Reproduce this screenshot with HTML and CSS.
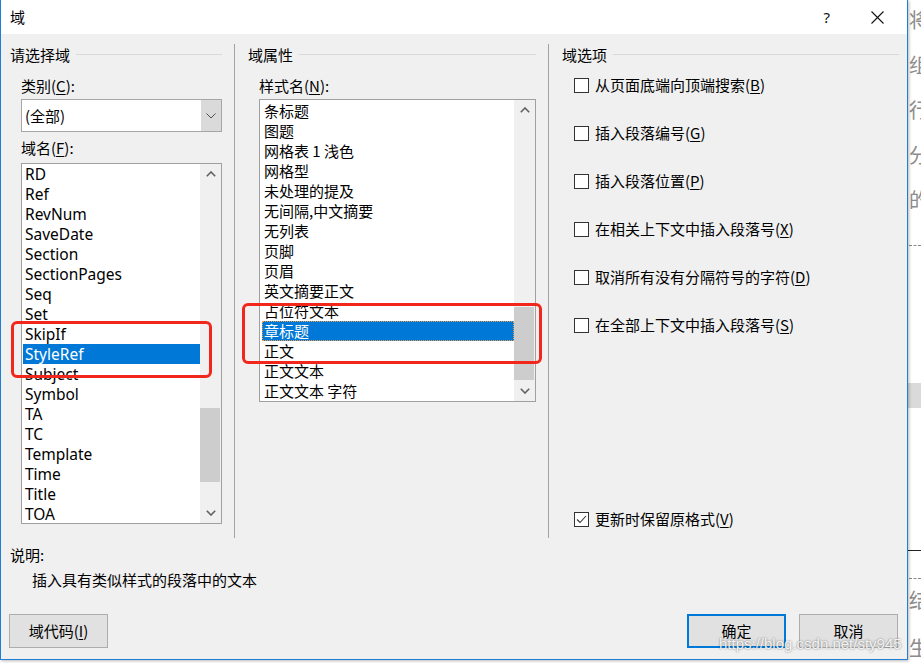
FILE: index.html
```html
<!DOCTYPE html>
<html lang="zh-CN">
<head>
<meta charset="utf-8">
<title>域</title>
<link rel="stylesheet" href="styles.css">
</head>
<body>
<div class="page">
  <div class="dialog">
    <div class="titlebar">
      <span class="title">域</span>
      <span class="help">?</span>
      <svg class="close" width="13" height="13" viewBox="0 0 13 13"><path d="M0.5 0.5 L12.5 12.5 M12.5 0.5 L0.5 12.5" stroke="#111" stroke-width="1.1" fill="none"/></svg>
    </div>

    <div class="main">
      <section class="col col1">
        <div class="group-head"><span>请选择域</span></div>
        <div class="field">
          <div class="label label-first">类别(<u>C</u>):</div>
          <div class="combo">
            <span class="combo-value">(全部)</span>
            <span class="combo-btn"><svg width="10" height="6" viewBox="0 0 10 6"><polyline points="0.5,0.5 5,5 9.5,0.5" fill="none" stroke="#505050" stroke-width="1"/></svg></span>
          </div>
          <div class="label label-second">域名(<u>F</u>):</div>
          <div class="listbox list-fields">
            <ul class="items latin">
              <li>RD</li>
              <li>Ref</li>
              <li>RevNum</li>
              <li>SaveDate</li>
              <li>Section</li>
              <li>SectionPages</li>
              <li>Seq</li>
              <li>Set</li>
              <li>SkipIf</li>
              <li class="sel">StyleRef</li>
              <li>Subject</li>
              <li>Symbol</li>
              <li>TA</li>
              <li>TC</li>
              <li>Template</li>
              <li>Time</li>
              <li>Title</li>
              <li>TOA</li>
            </ul>
            <div class="scrollbar">
              <div class="sb-btn"><svg width="10" height="6" viewBox="0 0 10 6"><polyline points="0.8,5.2 5,1 9.2,5.2" fill="none" stroke="#606060" stroke-width="1.6"/></svg></div>
              <div class="sb-track"><div class="sb-thumb"></div></div>
              <div class="sb-btn"><svg width="10" height="6" viewBox="0 0 10 6"><polyline points="0.8,0.8 5,5 9.2,0.8" fill="none" stroke="#606060" stroke-width="1.6"/></svg></div>
            </div>
          </div>
        </div>
      </section>

      <section class="col col2">
        <div class="group-head"><span>域属性</span></div>
        <div class="field">
          <div class="label label-first">样式名(<u>N</u>):</div>
          <div class="listbox list-styles">
            <ul class="items">
              <li>条标题</li>
              <li>图题</li>
              <li>网格表 1 浅色</li>
              <li>网格型</li>
              <li>未处理的提及</li>
              <li>无间隔,中文摘要</li>
              <li>无列表</li>
              <li>页脚</li>
              <li>页眉</li>
              <li>英文摘要正文</li>
              <li>占位符文本</li>
              <li class="sel">章标题</li>
              <li>正文</li>
              <li>正文文本</li>
              <li>正文文本 字符</li>
            </ul>
            <div class="scrollbar">
              <div class="sb-btn"><svg width="10" height="6" viewBox="0 0 10 6"><polyline points="0.8,5.2 5,1 9.2,5.2" fill="none" stroke="#606060" stroke-width="1.6"/></svg></div>
              <div class="sb-track"><div class="sb-thumb"></div></div>
              <div class="sb-btn"><svg width="10" height="6" viewBox="0 0 10 6"><polyline points="0.8,0.8 5,5 9.2,0.8" fill="none" stroke="#606060" stroke-width="1.6"/></svg></div>
            </div>
          </div>
        </div>
      </section>

      <section class="col col3">
        <div class="group-head"><span>域选项</span></div>
        <div class="options">
          <label class="check"><span class="box"></span><span>从页面底端向顶端搜索(<u>B</u>)</span></label>
          <label class="check"><span class="box"></span><span>插入段落编号(<u>G</u>)</span></label>
          <label class="check"><span class="box"></span><span>插入段落位置(<u>P</u>)</span></label>
          <label class="check"><span class="box"></span><span>在相关上下文中插入段落号(<u>X</u>)</span></label>
          <label class="check"><span class="box"></span><span>取消所有没有分隔符号的字符(<u>D</u>)</span></label>
          <label class="check"><span class="box"></span><span>在全部上下文中插入段落号(<u>S</u>)</span></label>
        </div>
        <label class="check check-last"><span class="box"><svg width="13" height="13" viewBox="0 0 13 13"><polyline points="2,6.5 5,9.5 11,3" fill="none" stroke="#333" stroke-width="1.1"/></svg></span><span>更新时保留原格式(<u>V</u>)</span></label>
      </section>
    </div>

    <div class="desc">
      <div class="desc-label">说明:</div>
      <div class="desc-text">插入具有类似样式的段落中的文本</div>
    </div>

    <div class="buttons">
      <button class="btn">域代码(<u>I</u>)</button>
      <button class="btn btn-default">确定</button>
      <button class="btn">取消</button>
    </div>
  </div>

  <div class="backdoc">
    <div class="bd-chars">
      <div>将</div>
      <div>组</div>
      <div>行</div>
      <div>分</div>
      <div>的</div>
    </div>
    <div class="bd-dash bd-dash1"></div>
    <div class="bd-band"></div>
    <div class="bd-rule"></div>
    <div class="bd-dash bd-dash2"></div>
    <div class="bd-char bd-c1">结</div>
    <div class="bd-char bd-c2">生</div>
  </div>

  <div class="annot annot-left"></div>
  <div class="annot annot-mid"></div>
  <div class="watermark">https://blog.csdn.net/sty945</div>
</div>
</body>
</html>
```

FILE: styles.css
```css
* {
  box-sizing: border-box;
  margin: 0;
  padding: 0;
}

html,
body {
  width: 921px;
  height: 663px;
  overflow: hidden;
}

body {
  background: #ffffff;
  font-family: "Noto Sans CJK SC", "Noto Sans", sans-serif;
  font-size: 15px;
  line-height: 20px;
  color: #000000;
}

u {
  text-decoration: underline;
  text-underline-offset: 2px;
  text-decoration-thickness: 1px;
}

.page {
  position: relative;
  display: flex;
  width: 921px;
  height: 663px;
}

/* ---------- dialog ---------- */
.dialog {
  position: relative;
  z-index: 1;
  flex: none;
  width: 908px;
  height: 660px;
  display: flex;
  flex-direction: column;
  background: #f0f0f0;
  border: 1px solid #1f7fd6;
  border-top: none;
  box-shadow: 1px 1px 3px rgba(0, 0, 0, 0.28);
}

.titlebar {
  height: 34px;
  flex: none;
  display: flex;
  align-items: center;
  background: #ffffff;
  padding-left: 9px;
  padding-right: 23px;
}

.title {
  font-size: 15px;
  line-height: 20px;
}

.help {
  margin-left: auto;
  font-size: 15px;
  line-height: 20px;
  font-family: "Noto Sans", sans-serif;
  color: #111;
}

.close {
  margin-left: 41px;
  margin-top: 1px;
}

/* ---------- main three columns ---------- */
.main {
  display: flex;
  height: 494px;
  margin-top: 10px;
  flex: none;
}

.col {
  display: flex;
  flex-direction: column;
  padding-top: 1px;
}

.col1 {
  width: 234px;
  border-right: 1px solid #a3a3a3;
  padding-left: 9px;
  padding-right: 12px;
}

.col2 {
  width: 314px;
  border-right: 1px solid #a3a3a3;
  padding-left: 13px;
  padding-right: 12px;
}

.col3 {
  flex: 1;
  padding-left: 13px;
  padding-right: 8px;
  padding-bottom: 9px;
}

.group-head {
  display: flex;
  align-items: center;
  height: 20px;
}

.group-head::after {
  content: "";
  flex: 1;
  height: 1px;
  margin-left: 6px;
  margin-top: -1px;
  background: #d9d9d9;
}

.field {
  margin-left: 11px;
  display: flex;
  flex-direction: column;
}

.label {
  height: 20px;
}

.label-first {
  margin-top: 11px;
}

.label-second {
  margin-top: 6px;
}

/* combo */
.combo {
  margin-top: 3px;
  height: 33px;
  display: flex;
  border: 1px solid #a6a6a6;
  background: #ffffff;
}

.combo-value {
  flex: 1;
  padding-left: 3px;
  display: flex;
  align-items: center;
}

.combo-btn {
  width: 20px;
  background: #dadada;
  display: flex;
  align-items: center;
  justify-content: center;
}

/* list boxes */
.listbox {
  display: flex;
  border: 1px solid #a0a0a0;
  background: #ffffff;
  overflow: hidden;
}

.list-fields {
  margin-top: 5px;
  height: 361px;
}

.list-styles {
  margin-top: 3px;
  height: 303px;
}

.items {
  flex: 1;
  list-style: none;
  overflow: hidden;
}

.items li {
  height: 20px;
  line-height: 20px;
  white-space: nowrap;
}

.items.latin {
  font-family: "Noto Sans", "Noto Sans CJK SC", sans-serif;
  font-size: 15.5px;
}

.list-fields .items li {
  margin-left: 1px;
  padding-left: 2px;
}

.list-styles .items {
  padding-top: 1px;
}

.list-styles .items li {
  margin-left: 2px;
  padding-left: 2px;
}

.items li.sel {
  background: #0078d7;
  color: #ffffff;
}

.list-styles .items li.sel {
  outline: 1px dotted #f2a043;
  outline-offset: -1px;
}

.scrollbar {
  width: 21px;
  flex: none;
  display: flex;
  flex-direction: column;
  background: #f0f0f0;
}

.sb-btn {
  height: 20px;
  flex: none;
  display: flex;
  align-items: center;
  justify-content: center;
}

.sb-track {
  flex: 1;
}

.sb-thumb {
  background: #cdcdcd;
  margin-right: 1px;
}

.list-fields .sb-thumb {
  margin-top: 224px;
  height: 74px;
}

.list-styles .sb-thumb {
  margin-top: 187px;
  height: 73px;
}

/* options */
.options {
  display: flex;
  flex-direction: column;
  gap: 28px;
  margin-top: 10px;
  margin-left: 12px;
}

.check {
  display: flex;
  align-items: center;
  height: 20px;
  gap: 6px;
  white-space: nowrap;
}

.box {
  width: 15px;
  height: 15px;
  flex: none;
  border: 1px solid #333333;
  background: #ffffff;
  display: flex;
  align-items: center;
  justify-content: center;
}

.check-last {
  margin-top: auto;
  margin-left: 12px;
}

/* description */
.desc {
  padding-left: 9px;
  margin-top: 7px;
}

.desc-label {
  height: 20px;
}

.desc-text {
  margin-top: 5px;
  padding-left: 22px;
  height: 20px;
}

/* buttons */
.buttons {
  display: flex;
  margin-top: 24px;
  padding-left: 8px;
  padding-right: 9px;
  gap: 13px;
}

.btn {
  width: 99px;
  height: 34px;
  background: #e1e1e1;
  border: 1px solid #adadad;
  font-family: "Noto Sans CJK SC", "Noto Sans", sans-serif;
  font-size: 15px;
  line-height: 20px;
  color: #000;
}

.btn-default {
  margin-left: auto;
  border: 2px solid #0078d7;
}

/* ---------- background document strip ---------- */
.backdoc {
  flex: 1;
  overflow: hidden;
  background: #ffffff;
  color: #8c8c8c;
  font-size: 20px;
  padding-left: 1px;
  display: flex;
  flex-direction: column;
  white-space: nowrap;
}

.bd-chars {
  margin-top: -3px;
  line-height: 45px;
}

.bd-dash {
  height: 0;
  border-top: 1px dashed #8a8a8a;
}

.bd-dash1 {
  margin-top: 23px;
}

.bd-band {
  margin-top: 137px;
  height: 25px;
  margin-left: -1px;
  background: #dadada;
}

.bd-rule {
  margin-top: 142px;
  height: 1px;
  margin-left: -1px;
  background: #222;
}

.bd-dash2 {
  margin-top: 27px;
}

.bd-char {
  line-height: 24px;
}

.bd-c1 {
  margin-top: 9px;
}

.bd-c2 {
  margin-top: 24px;
}

/* ---------- overlays ---------- */
.annot {
  position: absolute;
  z-index: 2;
  border: 3px solid #f2271c;
  border-radius: 6px;
}

.annot-left {
  left: 11px;
  top: 321px;
  width: 201px;
  height: 57px;
}

.annot-mid {
  left: 242px;
  top: 303px;
  width: 300px;
  height: 61px;
}

.watermark {
  position: absolute;
  z-index: 3;
  left: 719px;
  top: 635px;
  font-family: "Liberation Sans", Arial, sans-serif;
  font-size: 15px;
  line-height: 17px;
  color: rgba(255, 255, 255, 0.9);
  text-shadow: 0 0 2px rgba(0, 0, 0, 0.55);
  white-space: nowrap;
}
```
